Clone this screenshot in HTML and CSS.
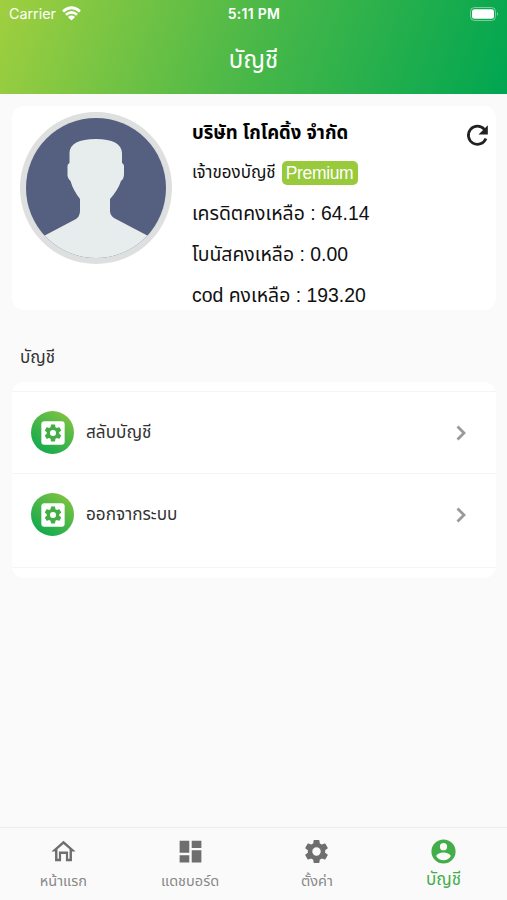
FILE: index.html
```html
<!DOCTYPE html>
<html lang="th">
<head>
<meta charset="utf-8">
<title>บัญชี</title>
<link rel="stylesheet" href="styles.css">
</head>
<body>
<header class="top">
  <div class="status">
    <span class="carrier">Carrier <svg class="wifi" viewBox="0 0 18 14"><path d="M9 13.6 5.6 10.4Q9 7.6 12.4 10.4Z"/><path class="arc" d="M3.7 8.2Q9 3.8 14.3 8.2M1 5.2Q9-2 17 5.2"/></svg></span>
    <span class="clock">5:11 PM</span>
    <span class="batt"><svg viewBox="0 0 29 14"><rect class="shell" x=".5" y=".5" width="25" height="13" rx="4"/><rect x="2" y="2.3" width="22" height="9.4" rx="2.5"/><path class="tip" d="M27 5q2 2 0 4z"/></svg></span>
  </div>
  <h1>บัญชี</h1>
</header>
<main>
  <section class="profile">
    <svg class="avatar" viewBox="0 0 152 152"><defs><clipPath id="face"><circle cx="76" cy="76" r="70"/></clipPath></defs><circle cx="76" cy="76" r="76" fill="#dedfdf"/><circle cx="76" cy="76" r="70" fill="#556080"/><path clip-path="url(#face)" fill="#e7eced" d="M60 99V87Q53 78 50.5 69Q47 66 47.500 61V54Q47.500 52 49.500 51V41Q50 27 76 27Q101 27 102 41V51Q104 52 104 54V62Q104 67 101 69Q98 78 90 87V99Q90 103 94 106L132 126V152H20V126L56 107Q60 104 60 99Z"/></svg>
    <div class="info">
      <h2>บริษัท โกโคดิ้ง จำกัด</h2>
      <p><span class="role">เจ้าของบัญชี</span><b class="badge">Premium</b></p>
      <p>เครดิตคงเหลือ : 64.14</p>
      <p>โบนัสคงเหลือ : 0.00</p>
      <p>cod คงเหลือ : 193.20</p>
    </div>
    <svg class="refresh" viewBox="0 0 24 24"><path class="ring" d="M18.500 14.300A7 7 0 1 1 17.300 7.300"/><path d="M20 4v7.200h-7.200z"/></svg>
  </section>
  <h3>บัญชี</h3>
  <section class="menu">
    <a class="row"><span class="ico"><svg viewBox="0 0 24 24"><use href="#gearbox"/></svg></span><span class="label">สลับบัญชี</span><svg class="chev" viewBox="0 0 10 16"><path d="m1.500 1.500 6.500 6.500-6.500 6.500"/></svg></a>
    <a class="row"><span class="ico"><svg viewBox="0 0 24 24"><use href="#gearbox"/></svg></span><span class="label">ออกจากระบบ</span><svg class="chev" viewBox="0 0 10 16"><path d="m1.500 1.500 6.500 6.500-6.500 6.500"/></svg></a>
  </section>
</main>
<nav>
  <a><svg viewBox="0 0 24 24"><path d="M12 5.690l5 4.500V18h-1.200v-6H8.200v6H7v-7.810l5-4.500M12 3 2 12h3v8h5v-6h4v6h5v-8h3z"/></svg><span>หน้าแรก</span></a>
  <a><svg viewBox="0 0 24 24"><path d="M3 13h8V3H3zm0 8h8v-6H3zm10 0h8V11h-8zm0-18v6h8V3z"/></svg><span>แดชบอร์ด</span></a>
  <a><svg viewBox="0 0 24 24"><use href="#gear"/></svg><span>ตั้งค่า</span></a>
  <a class="on"><svg viewBox="0 0 24 24"><path d="M12 2a10 10 0 1 0 0 20 10 10 0 0 0 0-20zm0 3a3 3 0 1 1 0 6 3 3 0 0 1 0-6zm0 14.200a7.200 7.200 0 0 1-6-3.220c.03-1.990 4-3.080 6-3.080s5.970 1.090 6 3.080a7.200 7.200 0 0 1-6 3.220z"/></svg><span>บัญชี</span></a>
</nav>
<svg class="defs"><defs>
<path id="gear" fill-rule="evenodd" d="M19.140 12.940c.04-.3.06-.61.06-.94s-.02-.64-.07-.94l2.030-1.580c.18-.14.23-.41.12-.61l-1.920-3.320c-.12-.22-.37-.29-.59-.22l-2.390.96c-.5-.38-1.030-.7-1.620-.94l-.36-2.540c-.04-.24-.24-.41-.48-.41h-3.840c-.24 0-.43.17-.47.41l-.36 2.540c-.59.24-1.130.57-1.620.94l-2.390-.96c-.22-.08-.47 0-.59.22L2.740 8.870c-.12.21-.08.47.12.61l2.030 1.580c-.05.3-.09.63-.09.94s.02.64.07.94l-2.030 1.580c-.18.14-.23.41-.12.61l1.920 3.320c.12.22.37.29.59.22l2.390-.96c.5.38 1.030.7 1.620.94l.36 2.540c.05.24.24.41.48.41h3.840c.24 0 .44-.17.47-.41l.36-2.540c.59-.24 1.130-.56 1.620-.94l2.390.96c.22.08.47 0 .59-.22l1.920-3.320c.12-.22.07-.47-.12-.61zM12 15.500a3.500 3.500 0 1 1 0-7 3.500 3.500 0 0 1 0 7z"/>
<g id="gearbox"><rect x="2" y="2" width="20" height="20" rx="2.500" fill="#fff"/><use href="#gear" fill="#45ad46" transform="translate(3 3) scale(.75)"/></g>
</defs></svg>
</body>
</html>
```
FILE: styles.css
```css
* { box-sizing: border-box; margin: 0; padding: 0; }
body { height: 900px; display: flex; flex-direction: column; background: #fafafa; color: #111; font-family: "Liberation Sans", "Noto Sans Thai", "Noto Sans", sans-serif; overflow: hidden; }
.top { height: 94px; background: linear-gradient(110deg, #a0cf3f, #4ab848 50%, #00a651); color: #fff; }
.status { height: 27px; display: grid; grid-template-columns: 1fr 1fr 1fr; align-items: center; padding: 0 8px 0 9px; font: 14.3px Inter, sans-serif; }
.carrier { display: flex; align-items: center; gap: 6px; }
.wifi { width: 19px; height: 15px; fill: #fff; margin-top: -1px; }
.arc { fill: none; stroke: #fff; stroke-width: 2.6; }
.clock { text-align: center; font-weight: 600; font-size: 14px; letter-spacing: .3px; }
.batt { text-align: right; }
.batt svg { width: 29px; height: 14px; fill: #fff; display: inline-block; vertical-align: middle; margin-top: -3px; }
.batt .shell { fill: none; stroke: #ffffff70; }
.batt .tip { fill: #ffffff80; }
h1 { font-size: 24px; font-weight: normal; line-height: 65px; text-align: center; }
main { flex: 1; padding: 12px 11px 0 12px; }
.profile { height: 204px; background: #fff; border-radius: 12px; display: flex; padding: 6px 4px 0 8px; }
.avatar { width: 152px; height: 152px; flex: none; }
.info { flex: 1; padding-left: 20px; }
h2 { font-size: 18.5px; line-height: 42px; height: 41px; white-space: nowrap; color: #000; }
.info p { font-size: 19.4px; line-height: 41px; height: 42px; display: flex; align-items: center; white-space: nowrap; }
.info p:nth-child(2) { height: 39px; }
.info p:nth-child(n+4) { height: 41px; }
.role { font-size: 17px; }
.info .badge { font-weight: normal; font-size: 17.5px; letter-spacing: -.35px; line-height: 24px; background: #98ca3c; color: #fff; border-radius: 5px; padding: 0 5px 0 4px; margin-left: 6px; }
.refresh { width: 31px; height: 31px; margin-top: 8px; margin-right: -1px; fill: #222; }
.ring { fill: none; stroke: #222; stroke-width: 2.1; }
h3 { font-size: 17px; font-weight: normal; line-height: 30px; margin: 33px 8px 9px; color: #333; }
.menu { background: #fff; border-radius: 12px; padding: 9px 0 10px; }
.row { display: flex; align-items: center; height: 82px; border-top: 1px solid #f5f5f5; padding: 0 30px 0 19px; }
.row + .row { height: 95px; border-bottom: 1px solid #f5f5f5; padding-bottom: 12px; }
.ico { width: 43px; height: 43px; border-radius: 50%; background: linear-gradient(35deg, #00a651, #8cc63f); display: grid; place-items: center; }
.ico svg { width: 28px; height: 28px; }
.label { flex: 1; font-size: 17.2px; padding: 1px 0 0 12px; color: #333; }
.chev { width: 10px; height: 16px; fill: none; stroke: #999; stroke-width: 2.8; }
nav { height: 73px; border-top: 1px solid #ececec; display: grid; grid-template-columns: repeat(4, 1fr); color: #6e6e6e; }
nav a { display: flex; flex-direction: column; align-items: center; padding-top: 9px; font-size: 14.5px; }
nav svg { width: 29px; height: 29px; fill: currentColor; }
nav span { line-height: 30px; color: #888; }
nav .on { color: #43ad4a; }
nav .on span { font-size: 17px; line-height: 27px; color: #43ad4a; }
.defs { position: absolute; width: 0; height: 0; }
```
